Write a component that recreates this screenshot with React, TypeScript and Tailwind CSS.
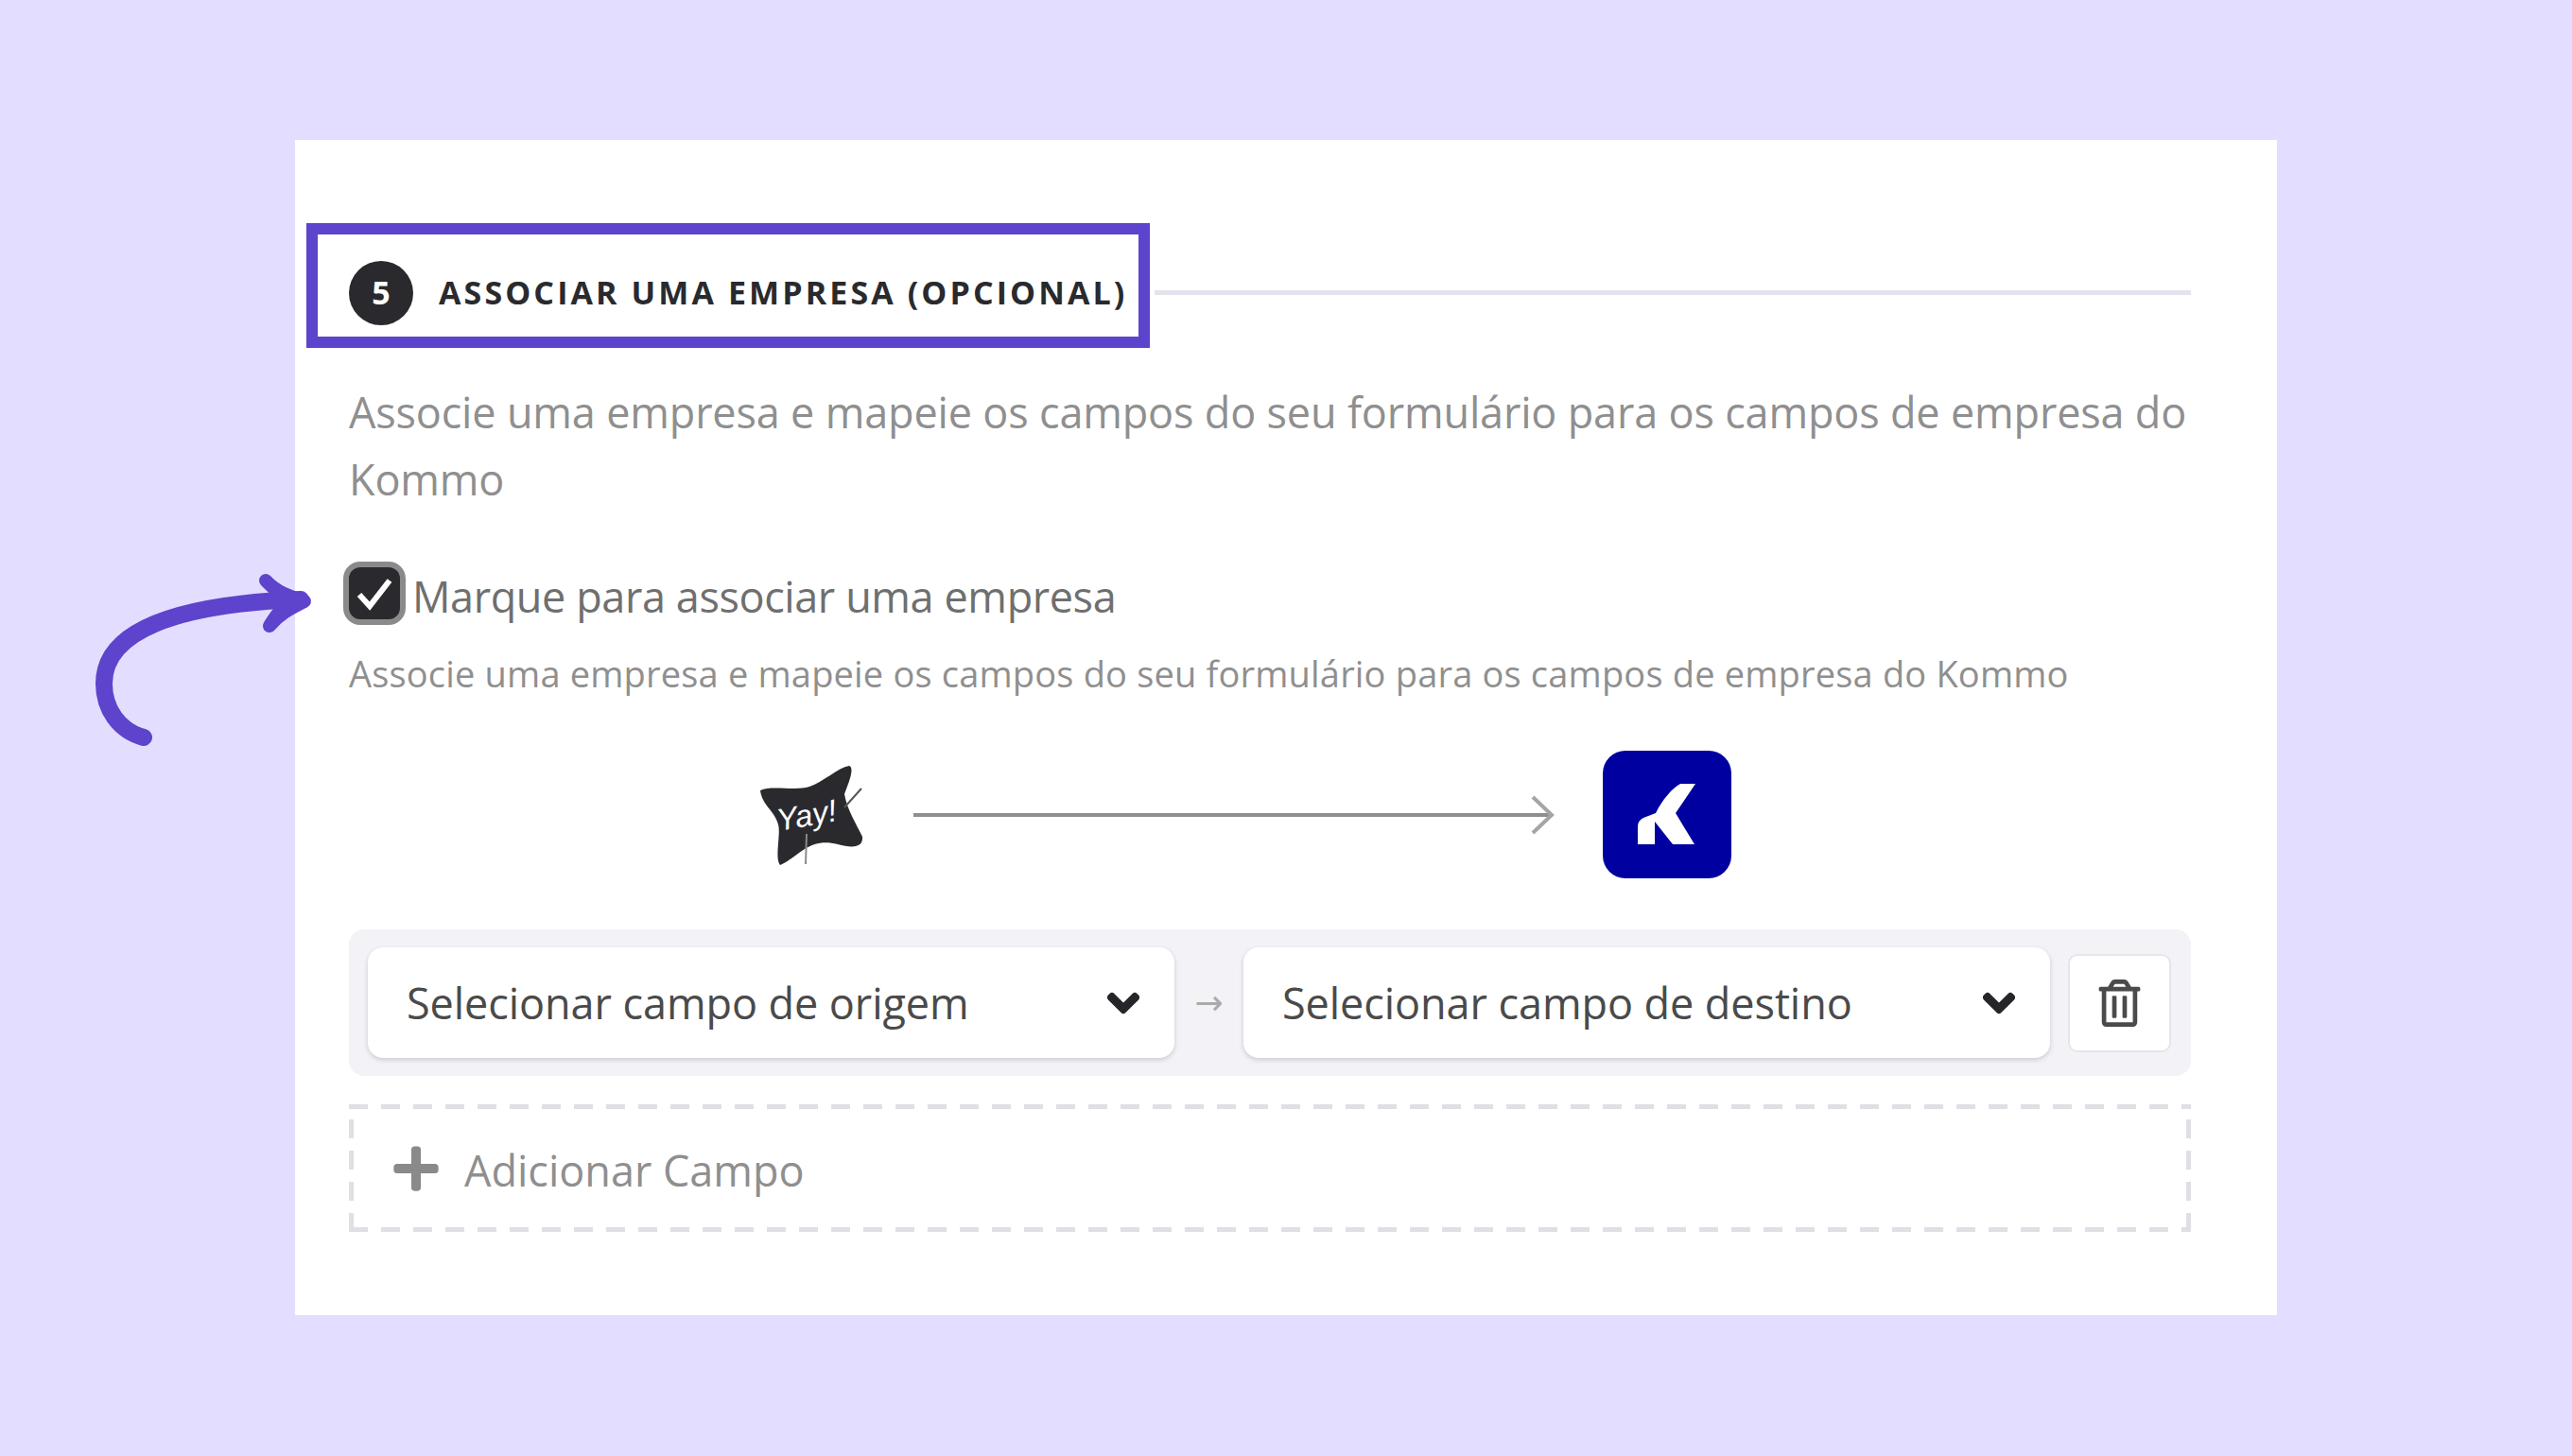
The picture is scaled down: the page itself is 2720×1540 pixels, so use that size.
import { JSX } from 'react'
import { FaChevronDown, FaPlus, FaRegTrashAlt } from 'react-icons/fa'

function CurvedArrow(): JSX.Element {
	return (
		<svg className="absolute left-0 top-0 pointer-events-none" width="400" height="820" viewBox="0 0 400 820" fill="none">
			<path d="M152 780 C126 773 110 750 110 723 C110 668 185 639 318 634" stroke="#5e43cd" strokeWidth="18" strokeLinecap="round" />
			<path d="M281 614 C292 626 306 631 322 636 C306 644 295 650 285 662 C292 650 300 642 304 635 C298 629 288 622 281 614 Z" fill="#5e43cd" stroke="#5e43cd" strokeWidth="14" strokeLinejoin="round" />
		</svg>
	)
}

function YayLogo(): JSX.Element {
	return (
		<svg width="115" height="110" viewBox="800 805 115 110" className="shrink-0">
			<path d="M803 834 C815 828 840 835 855 830 C870 825 885 810 897 808 C903 810 897 825 892 838 C895 855 905 870 911 883 C912 895 900 895 885 891 C870 887 860 890 850 896 C842 901 832 910 824 913 C818 905 825 880 822 870 C818 855 805 850 803 834 Z" fill="#2a2a2e" />
			<text x="820" y="872" fill="#ffffff" fontSize="33" fontStyle="italic" fontFamily="'Liberation Sans', sans-serif" transform="rotate(-10 850 860)">Yay!</text>
			<path d="M852 880 L851 912" stroke="#8a8a8a" strokeWidth="2" />
			<path d="M892 852 L910 832" stroke="#555" strokeWidth="2" />
		</svg>
	)
}

function KommoLogo(): JSX.Element {
	return (
		<div className="w-[136px] h-[135px] rounded-[24px] bg-[#0000a0] flex items-center justify-center shrink-0">
			<svg width="62" height="66" viewBox="0 0 62 66">
				<path d="M61 0 L45 0 C36 5 26 17 19 31 L6 36 C2 38 0 41 0 45 L0 64 L18 64 L18 40 L37 64 L60 64 L40 31 Z" fill="#ffffff" />
			</svg>
		</div>
	)
}

function FieldSelect({ label, width }: { label: string, width: string }): JSX.Element {
	return (
		<div className={ `${ width } h-[117px] bg-white rounded-[16px] shadow-[0_2px_5px_rgba(60,60,90,0.22)] flex items-center justify-between pl-[41px] pr-[36px] shrink-0` }>
			<span className="text-[45px] text-[#4a4a4a] tracking-[-0.07px]">{ label }</span>
			<FaChevronDown className="text-[#26262a] w-[36px] h-[36px]" stroke="currentColor" strokeWidth={ 50 } />
		</div>
	)
}

export default function App(): JSX.Element {
	return (
		<div className="relative h-[1540px] bg-[#e3deff] pt-[148px] pl-[312px] font-['Open_Sans',sans-serif] overflow-hidden">
			<CurvedArrow />
			<div className="w-[2096px] bg-white pt-[88px] pb-[88px] pl-[57px] pr-[91px]">
				<div className="flex items-center -ml-[45px]">
					<div className="h-[132px] w-[892px] border-[12px] border-[#5e43cd] flex items-center pl-[33px] pt-[15px] shrink-0">
						<div className="w-[68px] h-[68px] rounded-full bg-[#2a2a2e] text-white text-[34px] font-bold flex items-center justify-center">5</div>
						<span className="ml-[27px] text-[34px] font-bold text-[#2a2a2e] tracking-[3.1px] whitespace-nowrap">ASSOCIAR UMA EMPRESA (OPCIONAL)</span>
					</div>
					<div className="h-[5px] flex-1 ml-[5px] mt-[14px] bg-[#e4e2ec]" />
				</div>

				<p className="mt-[32px] text-[45px] leading-[71px] text-[#8f8f8f] tracking-[-0.17px]">
					Associe uma empresa e mapeie os campos do seu formulário para os campos de empresa do Kommo
				</p>

				<div className="mt-[52px] h-[67px] flex items-center -ml-[6px]">
					<div className="w-[66px] h-[67px] rounded-[18px] bg-[#2a2a2e] border-[6px] border-[#8a8a8a] flex items-center justify-center shrink-0">
						<svg width="42" height="38" viewBox="0 0 42 38" fill="none">
							<path d="M5 20 L16 32 L37 5" stroke="#ffffff" strokeWidth="6" />
						</svg>
					</div>
					<span className="ml-[7px] pt-[7px] leading-[60px] text-[45px] text-[#6f6f6f] tracking-[-0.4px]">Marque para associar uma empresa</span>
				</div>

				<p className="mt-[21px] text-[38px] leading-[60px] text-[#8f8f8f] tracking-[0.18px]">
					Associe uma empresa e mapeie os campos do seu formulário para os campos de empresa do Kommo
				</p>

				<div className="mt-[52px] flex items-center pl-[432px]">
					<YayLogo />
					<svg width="680" height="44" viewBox="0 0 680 44" fill="none" className="ml-[50px] shrink-0">
						<path d="M0 22 H675" stroke="#8f8f8f" strokeWidth="4" />
						<path d="M655 3 L675 22 L655 41" stroke="#a5a5a5" strokeWidth="4" />
					</svg>
					<div className="ml-[49px]">
						<KommoLogo />
					</div>
				</div>

				<div className="mt-[54px] h-[155px] bg-[#f3f2f7] rounded-[16px] flex items-center pl-[20px] pr-[20px]">
					<FieldSelect label="Selecionar campo de origem" width="w-[853px]" />
					<span className="w-[73px] text-center text-[36px] text-[#aaaaaa] font-['DejaVu_Sans',sans-serif] shrink-0">→</span>
					<FieldSelect label="Selecionar campo de destino" width="w-[853px]" />
					<div className="ml-[19px] w-[109px] h-[104px] bg-white rounded-[10px] border-[2px] border-[#e6e5ec] flex items-center justify-center shrink-0">
						<FaRegTrashAlt className="text-[#4a4a4a] w-[45px] h-[50px]" />
					</div>
				</div>

				<div className="mt-[30px] h-[135px] flex items-center pl-[44px] bg-no-repeat [background-image:repeating-linear-gradient(90deg,#e0dfe6_0_20px,transparent_20px_34px),repeating-linear-gradient(90deg,#e0dfe6_0_20px,transparent_20px_34px),repeating-linear-gradient(0deg,#e0dfe6_0_20px,transparent_20px_33px),repeating-linear-gradient(0deg,#e0dfe6_0_20px,transparent_20px_33px)] [background-size:100%_5px,100%_5px,5px_100%,5px_100%] [background-position:0_0,0_100%,0_0,100%_0]">
					<FaPlus className="text-[#8a8a8a] w-[54px] h-[54px]" />
					<span className="ml-[24px] leading-[60px] pt-[4px] text-[45px] text-[#8f8f8f] tracking-[0px]">Adicionar Campo</span>
				</div>
			</div>
		</div>
	)
}
